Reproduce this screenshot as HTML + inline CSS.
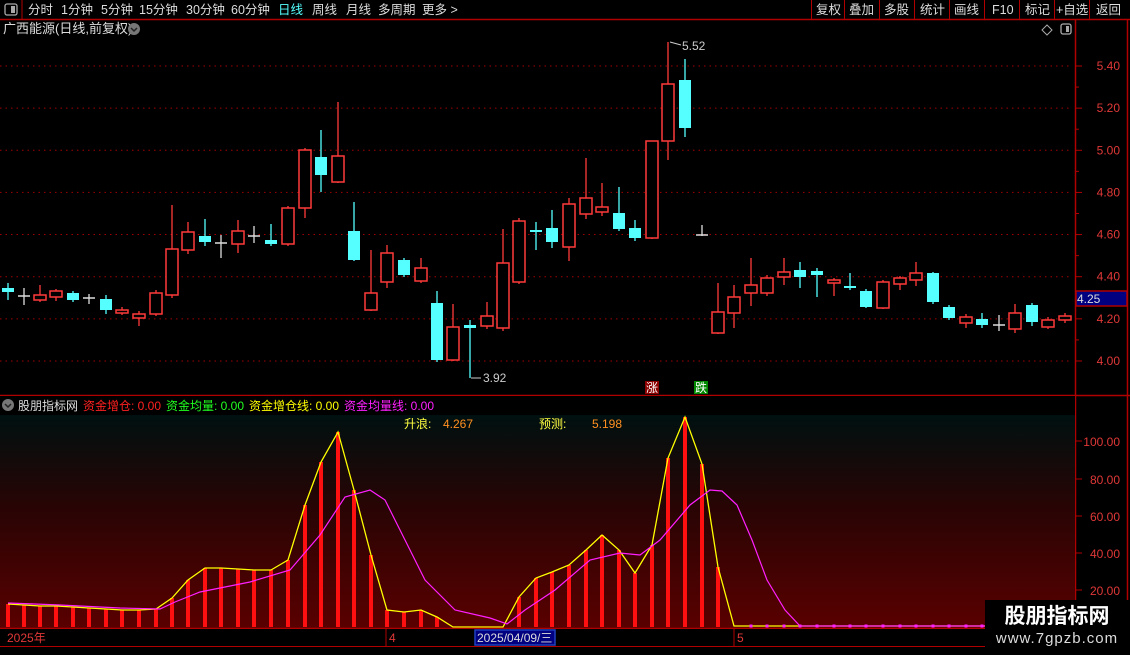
<!DOCTYPE html><html><head><meta charset="utf-8"><style>
body{margin:0;background:#000;width:1130px;height:650px;overflow:hidden;font-family:"Liberation Sans","Noto Sans CJK SC",sans-serif;}
svg text{font-family:"Liberation Sans","Noto Sans CJK SC",sans-serif;}
</style></head><body>
<svg id="s" width="1130" height="650" xmlns="http://www.w3.org/2000/svg"></svg>
<script>
var s='';
function R(x,y,w,h,f,st){s+='<rect x="'+x+'" y="'+y+'" width="'+w+'" height="'+h+'" fill="'+f+'"'+(st?' stroke="'+st+'" stroke-width="1.5"':'')+'/>';}
function L(x1,y1,x2,y2,c,w,d){s+='<line x1="'+x1+'" y1="'+y1+'" x2="'+x2+'" y2="'+y2+'" stroke="'+c+'" stroke-width="'+(w||1)+'"'+(d?' stroke-dasharray="'+d+'"':'')+'/>';}
function T(x,y,t,c,sz,a,ex){s+='<text x="'+x+'" y="'+y+'" fill="'+c+'" font-size="'+(sz||12)+'"'+(a?' text-anchor="'+a+'"':'')+(ex||'')+'>'+t+'</text>';}
s+='<defs><linearGradient id="g" x1="0" y1="0" x2="0" y2="1"><stop offset="0" stop-color="#001010"/><stop offset="0.45" stop-color="#2a0404"/><stop offset="1" stop-color="#5a0000"/></linearGradient></defs>';
R(0,0,1130,19,'#000');L(0,19.5,1130,19.5,'#b00000',1.5);
L(22,0,22,19,'#b00000');
s+='<rect x="5" y="4" width="12" height="11" rx="2" fill="none" stroke="#aaa" stroke-width="1.3"/><rect x="11" y="6" width="4" height="7" fill="#aaa"/>';
var tb=[['分时',28],['1分钟',61],['5分钟',101],['15分钟',139],['30分钟',186],['60分钟',231],['日线',278],['周线',312],['月线',346],['多周期',378],['更多 &gt;',422]];
tb.forEach(function(t){T(t[1],14,t[0],t[0]=='日线'?'#55ffff':'#ddd',12.5);});
var rb=[['复权',816],['叠加',849],['多股',884],['统计',920],['画线',954],['F10',992],['标记',1025],['+自选',1056],['返回',1096]];
[811,844,879,914,949,984,1019,1054,1089].forEach(function(x){L(x+0.5,0,x+0.5,19,'#b00000');});
rb.forEach(function(t){T(t[1],14,t[0],'#ddd',12.5);});
T(3,33,'广西能源(日线,前复权)','#ddd',13);
s+='<circle cx="134" cy="29" r="6" fill="#777"/><path d="M131 28l3 3 3-3" stroke="#222" fill="none" stroke-width="1.5"/>';
s+='<path d="M1047 25l5 5-5 5-5-5z" fill="none" stroke="#aaa"/><rect x="1061" y="24" width="10" height="10" rx="2" fill="none" stroke="#aaa" stroke-width="1.3"/><rect x="1066" y="26" width="3" height="6" fill="#aaa"/>';
L(1075.5,20,1075.5,650,'#b00000',1.5);L(1127.5,20,1127.5,650,'#b00000',1.5);
L(0,395.5,1130,395.5,'#b00000',1.5);
function py(p){return 66+(5.40-p)*210.7;}
[5.4,5.2,5.0,4.8,4.6,4.4,4.2,4.0].forEach(function(p){var y=py(p);L(0,y,1072,y,'#a00000',1,'1.5 4');L(1075,y,1082,y,'#b00000');T(1120,y+4,p.toFixed(2),'#e03838',12,'end');});
[5.3,5.1,4.9,4.7,4.5,4.3,4.1].forEach(function(p){L(1075,py(p),1079,py(p),'#b00000');});
R(1076,291,51,15,'#000080','#b00000');T(1077,303,'4.25','#ddd',12);
var C=[[8,288,292,283,300,'c'],[24,296,297,288,305,'w'],[40,295,300,285,302,'r'],[56,291,297,289,301,'r'],[73,293,300,291,302,'c'],[89,298,302,294,304,'w'],[106,299,310,295,314,'c'],[122,310,313,307,315,'r'],[139,314,318,311,326,'r'],[156,293,314,290,316,'r'],[172,249,295,205,298,'r'],[188,232,250,222,254,'r'],[205,236,242,219,246,'c'],[221,243,244,235,258,'w'],[238,231,244,220,253,'r'],[254,236,238,226,243,'w'],[271,240,244,224,246,'c'],[288,208,244,206,246,'r'],[305,150,208,148,218,'r'],[321,157,175,130,192,'c'],[338,156,182,102,183,'r'],[354,231,260,202,261,'c'],[371,293,310,250,311,'r'],[387,253,282,245,288,'r'],[404,260,275,258,277,'c'],[421,268,281,258,283,'r'],[437,303,360,291,362,'c'],[453,327,360,304,361,'r'],[470,325,328,320,378,'c'],[487,316,326,302,329,'r'],[503,263,328,229,331,'r'],[519,221,282,218,284,'r'],[536,230,232,222,250,'c'],[552,228,242,210,248,'c'],[569,204,247,198,261,'r'],[586,198,214,158,219,'r'],[602,207,212,183,216,'r'],[619,213,229,187,231,'c'],[635,228,238,220,241,'c'],[652,141,238,141,239,'r'],[668,84,141,42,160,'r'],[685,80,128,59,137,'c'],[702,235,236,225,236,'w'],[718,312,333,283,334,'r'],[734,297,313,285,328,'r'],[751,285,293,258,306,'r'],[767,278,293,275,296,'r'],[784,272,277,258,285,'r'],[800,270,277,262,288,'c'],[817,271,275,268,297,'c'],[834,280,283,278,296,'r'],[850,286,288,273,290,'c'],[866,291,307,289,308,'c'],[883,282,308,280,309,'r'],[900,278,284,276,290,'r'],[916,273,280,262,286,'r'],[933,273,302,272,304,'c'],[949,307,318,305,320,'c'],[966,317,323,314,328,'r'],[982,319,325,313,328,'c'],[999,325,327,315,331,'w'],[1015,313,329,304,333,'r'],[1032,305,322,303,326,'c'],[1048,320,327,317,329,'r'],[1065,316,320,313,323,'r']];
C.forEach(function(c){var x=c[0],col=c[5]=='c'?'#55ffff':c[5]=='r'?'#ff3a3a':'#ddd';
L(x,c[3],x,c[4],col,1.3);
if(c[5]=='c')R(x-6,c[1],12,Math.max(c[2]-c[1],2),col);
else if(c[5]=='r')R(x-6,c[1],12,Math.max(c[2]-c[1],2),'#000',col);
else L(x-6,c[1],x+6,c[1],col,1.5);});
T(682,50,'5.52','#ccc',12);L(670,42,681,45,'#ccc');
T(483,382,'3.92','#ccc',12);L(471,378,481,378,'#ccc');
R(645,381,14,13,'#8b0000');T(646,392,'涨','#fff',12);
R(694,381,14,13,'#008800');T(695,392,'跌','#fff',12);
R(0,396,1075,19,'#000');
s+='<circle cx="8" cy="405" r="6" fill="#777"/><path d="M5 404l3 3 3-3" stroke="#222" fill="none" stroke-width="1.5"/>';
T(18,410,'股朋指标网','#ddd',12);T(83,410,'资金增仓: 0.00','#ff2020',12);T(166,410,'资金均量: 0.00','#20ff20',12);T(249,410,'资金增仓线: 0.00','#ffff00',12);T(344,410,'资金均量线: 0.00','#ff20ff',12);
R(0,415,1075,213,'url(#g)');
T(404,428,'升浪:','#ffff40',12);T(443,428,'4.267','#ff9020',12);T(539,428,'预测:','#ffff40',12);T(592,428,'5.198','#ff9020',12);
[[100,441],[80,479],[60,516],[40,553],[20,590]].forEach(function(a){L(1075,a[1],1082,a[1],'#b00000');T(1120,a[1]+5,a[0].toFixed(2),'#e03838',12,'end');});
var Y=[604,605,606,606,607,608,609,610,610,609,598,580,568,568,569,570,570,560,505,462,432,490,555,610,612,610,617,627,627,627,627,597,578,572,565,550,535,550,573,545,458,417,464,567,626];
var X=C.map(function(c){return c[0];});
var yp='';X.forEach(function(x,i){var y=i<Y.length?Y[i]:626;yp+=x+','+y+' ';if(y<624)R(x-2,y,4,627-y,'#ff1010');});
yp+='1072,626';
s+='<polyline points="'+yp+'" fill="none" stroke="#ffff00" stroke-width="1.3"/>';
var M=[[8,603],[60,605],[120,608],[160,609],[175,602],[200,592],[250,582],[290,570],[320,535],[345,497],[370,490],[385,500],[405,540],[425,580],[455,610],[490,618],[507,624],[525,610],[555,590],[590,560],[620,553],[640,555],[660,540],[690,505],[710,490],[722,491],[737,505],[752,540],[767,580],[785,610],[800,626],[1072,626]];
s+='<polyline points="'+M.map(function(p){return p.join(',')}).join(' ')+'" fill="none" stroke="#ff20ff" stroke-width="1.2"/>';
for(var i=45;i<X.length;i++)R(X[i]-1.5,624.5,3,3,'#ff20ff');
L(0,628.5,1130,628.5,'#b00000',1.5);R(0,629,1075,17,'#000');
T(7,642,'2025年','#e03838',12);L(386,629,386,646,'#b00000');T(389,642,'4','#e03838',12);
R(475,630,80,15,'#000080','#2040c0');T(477,642,'2025/04/09/三','#ddd',12);
L(734,629,734,646,'#b00000');T(737,642,'5','#e03838',12);
L(0,646.5,1130,646.5,'#b00000');
R(985,600,145,50,'#000');
T(1057,623,'股朋指标网','#fff',21,'middle',' font-weight="bold"');T(1057,643,'www.7gpzb.com','#ddd',15,'middle',' letter-spacing="1"');
document.getElementById('s').innerHTML=s;
</script>
</body></html>
